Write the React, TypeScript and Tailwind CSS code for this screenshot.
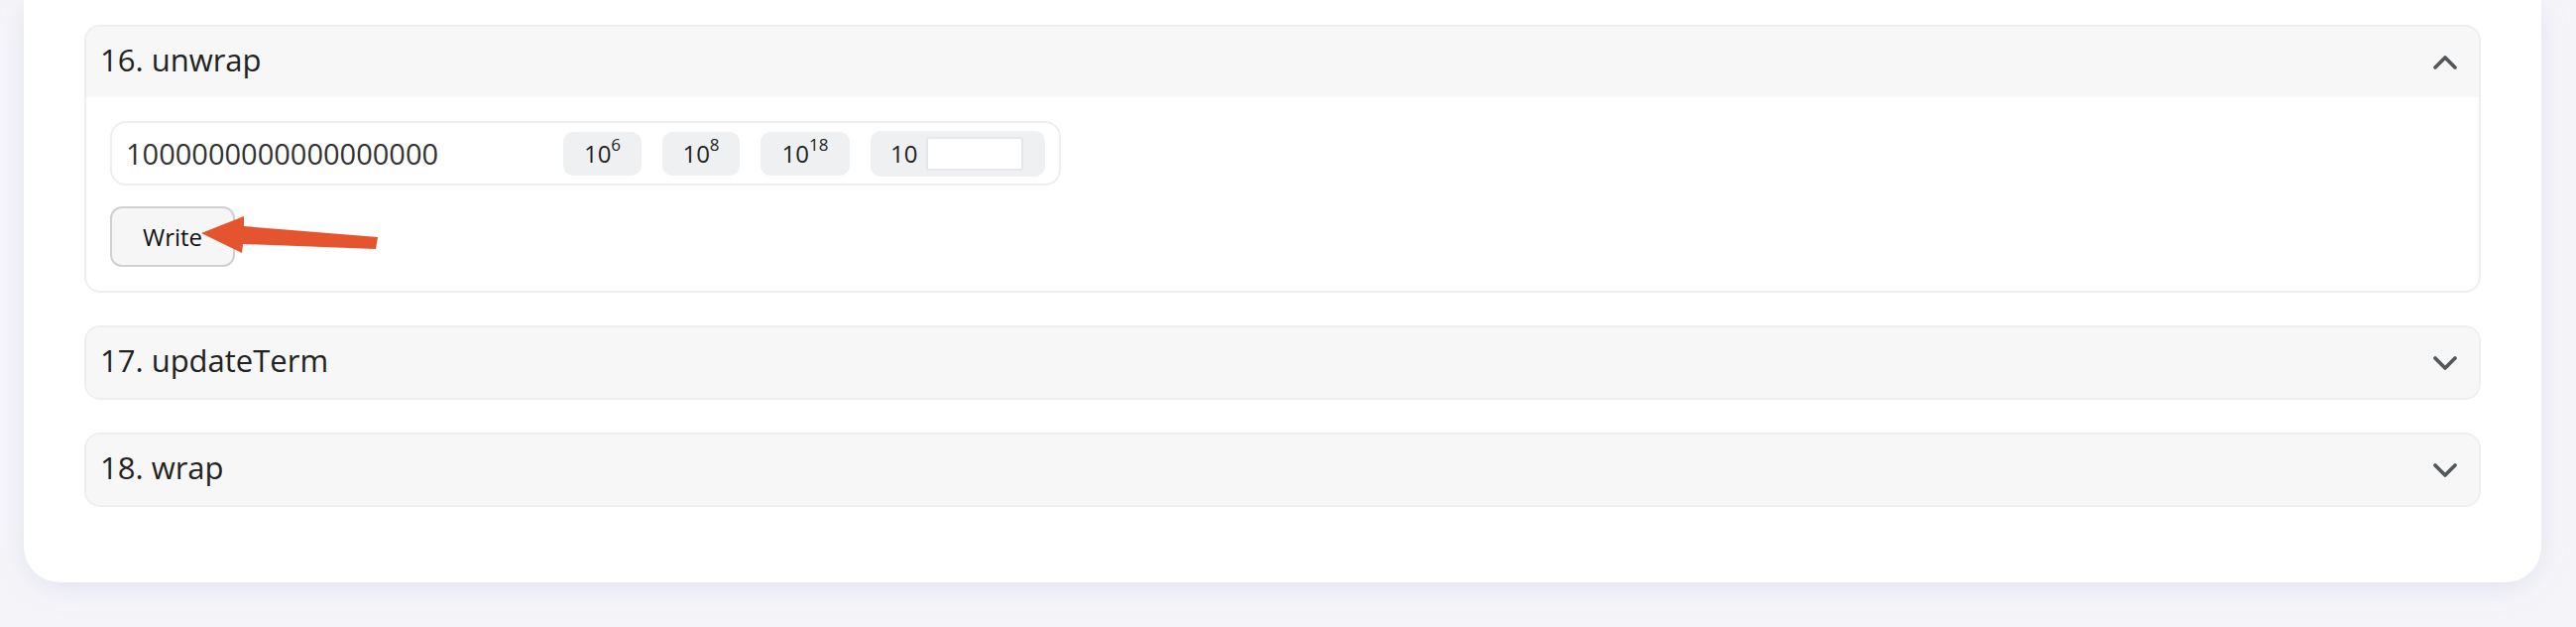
import React from "react";

const font = { fontFamily: '"Open Sans", "Noto Sans", sans-serif' };

function Chevron({ up }: { up?: boolean }) {
  return (
    <svg width="26" height="16" viewBox="0 0 26 16" fill="none">
      <polyline
        points={up ? "3,13 13,3 23,13" : "3,3 13,13 23,3"}
        stroke="#53585c"
        strokeWidth="3.8"
        strokeLinecap="round"
        strokeLinejoin="round"
      />
    </svg>
  );
}

function Header({ title, open }: { title: string; open?: boolean }) {
  return (
    <div className="flex h-[71px] items-center justify-between bg-[#f7f7f7] pl-[14px] pr-[21px]">
      <span className="mb-[4px] text-[31px] text-[#222]">{title}</span>
      <Chevron up={open} />
    </div>
  );
}

function Pow({ exp, w }: { exp: string; w: string }) {
  return (
    <div
      className={`flex h-[44px] items-center justify-center rounded-[10px] bg-[#eff0f1] text-[24px] text-[#222] ${w}`}
    >
      10<sup className="text-[17px]">{exp}</sup>
    </div>
  );
}

export default function App() {
  return (
    <div
      className="relative h-[632px] w-[2598px] overflow-hidden bg-[#f5f5f9] pl-[24px]"
      style={font}
    >
      <div className="w-[2539px] rounded-b-[36px] bg-white px-[61px] pb-[76px] pt-[25px] shadow-[0_6px_30px_rgba(110,110,170,0.12)]">
        <div className="flex flex-col gap-[33px]">
          <div className="overflow-hidden rounded-[16px] border-2 border-[#eeeeee]">
            <Header title="16. unwrap" open />
            <div className="px-[24px] pb-[24px] pt-[24px]">
              <div className="flex h-[65px] w-[959px] items-center gap-[21px] rounded-[16px] border-2 border-[#eeeeee] pl-[14px] pr-[14px]">
                <span className="w-[420px] text-[29px] text-[#333]">
                  1000000000000000000
                </span>
                <Pow exp="6" w="w-[79px]" />
                <Pow exp="8" w="w-[78px]" />
                <Pow exp="18" w="w-[90px]" />
                <div className="flex h-[46px] w-[176px] items-center rounded-[10px] bg-[#eff0f1] pl-[20px] text-[24px] text-[#222]">
                  10
                  <div className="ml-[9px] h-[34px] w-[98px] rounded-[3px] border-2 border-[#e6e7eb] bg-white" />
                </div>
              </div>
              <button className="mt-[21px] h-[61px] w-[126px] rounded-[12px] border-2 border-[#cfd0d3] bg-[#f6f6f7] text-[24px] text-[#111]">
                Write
              </button>
            </div>
          </div>

          <div className="overflow-hidden rounded-[16px] border-2 border-[#eeeeee]">
            <Header title="17. updateTerm" />
          </div>

          <div className="overflow-hidden rounded-[16px] border-2 border-[#eeeeee]">
            <Header title="18. wrap" />
          </div>
        </div>
      </div>

      {/* annotation arrow over the Write button */}
      <svg
        className="absolute left-[195px] top-[210px]"
        width="195"
        height="55"
        viewBox="0 0 195 55"
      >
        <polygon
          points="8,25 51,8 51,18 186,29 184,41 50,36 49,45"
          fill="#e4542e"
        />
      </svg>
    </div>
  );
}
